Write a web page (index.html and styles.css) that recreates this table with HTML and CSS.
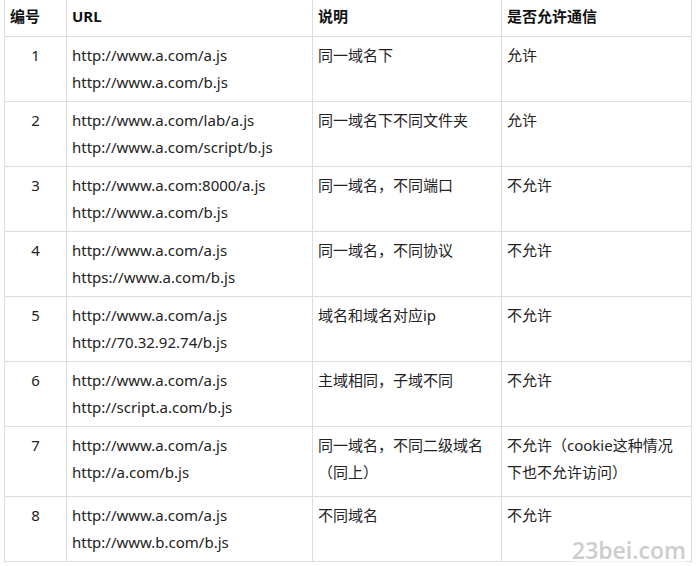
FILE: index.html
```html
<!DOCTYPE html>
<html lang="zh-CN">
<head>
    <meta charset="UTF-8">
    <title>同源策略</title>
    <link rel="stylesheet" href="styles.css">
</head>
<body>
    <div class="table-wrap">
        <table class="origin-table">
            <thead>
                <tr>
                    <th class="col-num">编号</th>
                    <th class="col-url">URL</th>
                    <th class="col-desc">说明</th>
                    <th class="col-allow">是否允许通信</th>
                </tr>
            </thead>
            <tbody>
                <tr>
                    <td class="num">1</td>
                    <td>http://www.a.com/a.js<br>http://www.a.com/b.js</td>
                    <td>同一域名下</td>
                    <td>允许</td>
                </tr>
                <tr>
                    <td class="num">2</td>
                    <td>http://www.a.com/lab/a.js<br>http://www.a.com/script/b.js</td>
                    <td>同一域名下不同文件夹</td>
                    <td>允许</td>
                </tr>
                <tr>
                    <td class="num">3</td>
                    <td>http://www.a.com:8000/a.js<br>http://www.a.com/b.js</td>
                    <td>同一域名，不同端口</td>
                    <td>不允许</td>
                </tr>
                <tr>
                    <td class="num">4</td>
                    <td>http://www.a.com/a.js<br>https://www.a.com/b.js</td>
                    <td>同一域名，不同协议</td>
                    <td>不允许</td>
                </tr>
                <tr>
                    <td class="num">5</td>
                    <td>http://www.a.com/a.js<br>http://70.32.92.74/b.js</td>
                    <td>域名和域名对应ip</td>
                    <td>不允许</td>
                </tr>
                <tr>
                    <td class="num">6</td>
                    <td>http://www.a.com/a.js<br>http://script.a.com/b.js</td>
                    <td>主域相同，子域不同</td>
                    <td>不允许</td>
                </tr>
                <tr class="row-tall">
                    <td class="num">7</td>
                    <td>http://www.a.com/a.js<br>http://a.com/b.js</td>
                    <td>同一域名，不同二级域名（同上）</td>
                    <td>不允许（cookie这种情况下也不允许访问）</td>
                </tr>
                <tr>
                    <td class="num">8</td>
                    <td>http://www.a.com/a.js<br>http://www.b.com/b.js</td>
                    <td>不同域名</td>
                    <td>不允许</td>
                </tr>
            </tbody>
        </table>
        <div class="watermark">23bei.com</div>
    </div>
</body>
</html>
```

FILE: styles.css
```css
* {
    margin: 0;
    padding: 0;
    box-sizing: border-box;
}

body {
    font-family: "Noto Sans", "Noto Sans CJK SC", sans-serif;
    font-size: 15px;
    color: #222;
    background: #fff;
    padding: 0 4px;
}

.table-wrap {
    position: relative;
    width: 687px;
    margin-top: -1px;
}

.origin-table {
    width: 687px;
    border-collapse: collapse;
    table-layout: fixed;
}

.origin-table th,
.origin-table td {
    border: 1px solid #ddd;
    text-align: left;
    vertical-align: top;
    padding: 5px 5px;
    line-height: 27px;
}

.origin-table th {
    height: 37px;
    font-weight: bold;
    color: #111;
    vertical-align: middle;
    padding-top: 2px;
}

.col-num { width: 62px; }
.col-url { width: 246px; }
.col-desc { width: 189px; }
.col-allow { width: 190px; }

.origin-table td.num {
    text-align: center;
}

.origin-table td {
    height: 65px;
}

.row-tall td {
    height: 70px;
}

.watermark {
    position: absolute;
    right: 5px;
    bottom: 0;
    font-family: "Open Sans", sans-serif;
    font-size: 23px;
    font-weight: 600;
    color: #cdcdcd;
    background: rgba(255, 255, 255, 0.6);
    line-height: 1;
}
```
